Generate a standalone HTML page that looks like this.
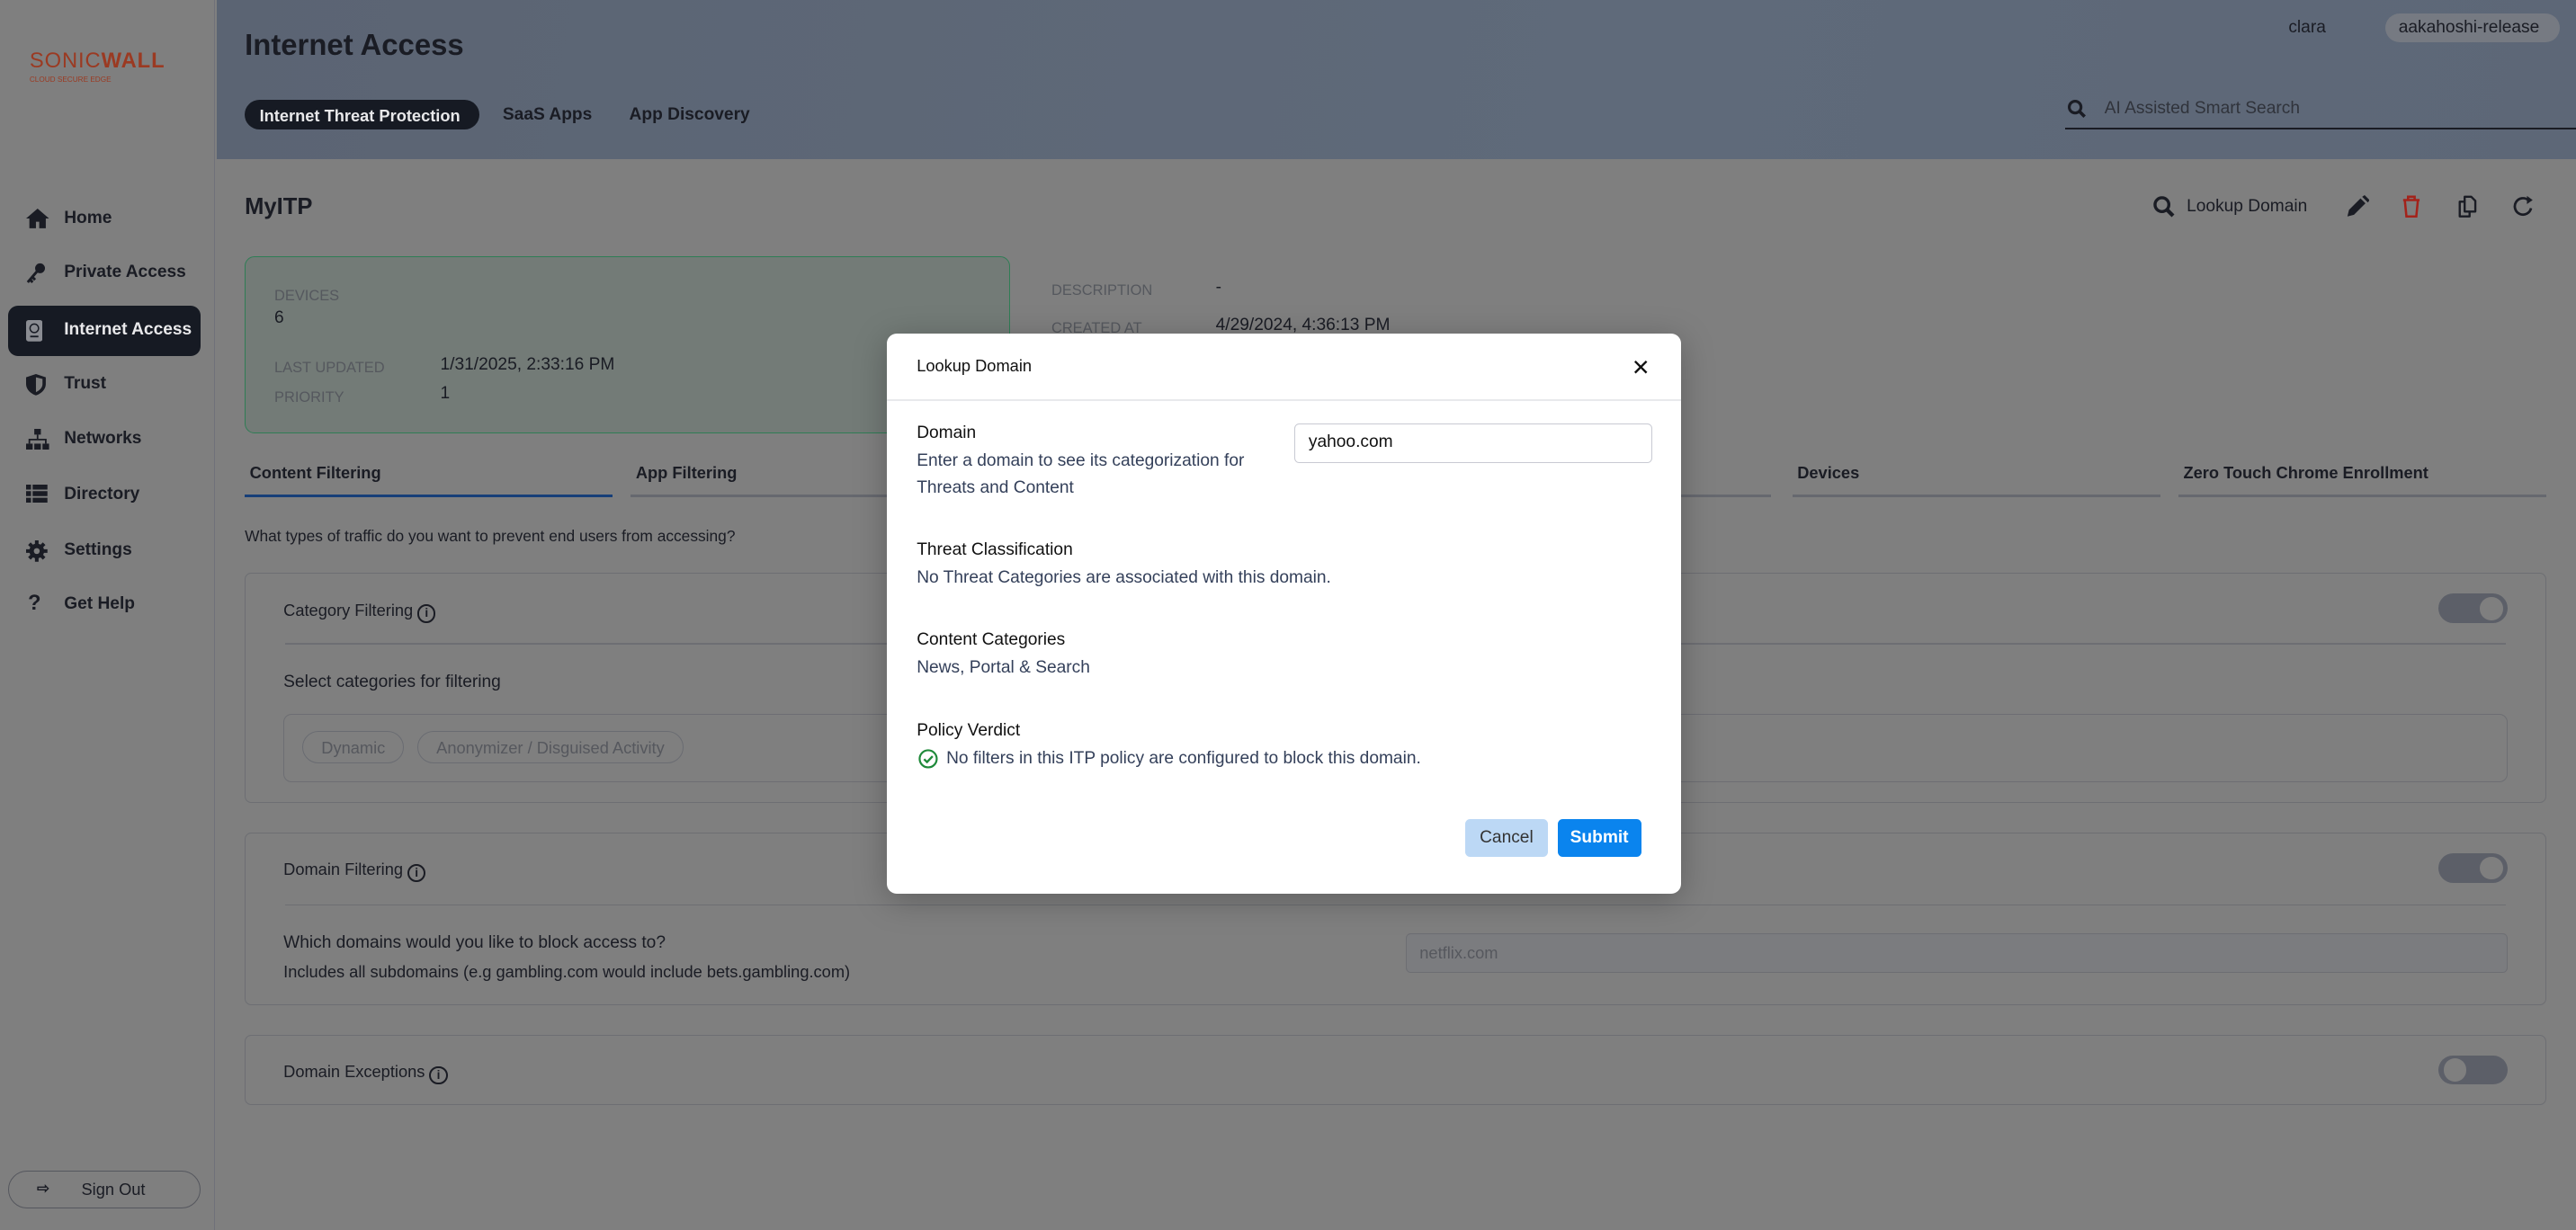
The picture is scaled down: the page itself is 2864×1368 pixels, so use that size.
<!DOCTYPE html>
<html><head><meta charset="utf-8"><style>
*{box-sizing:border-box;margin:0;padding:0}
html,body{width:2864px;height:1368px;overflow:hidden;background:#7f7f7f}
#root{zoom:1.82653;width:1568px;height:749px;position:relative;font-family:"Liberation Sans",sans-serif;color:#1a1c24;background:#7f7f7f}
.a{position:absolute;white-space:nowrap}
.side{position:absolute;left:0;top:0;width:131px;height:749px;border-right:1px solid #6f717a;background:#7f7f7f}
.nav{position:absolute;left:5px;width:117px;height:31px;border-radius:6px;font-size:10.5px;font-weight:bold;color:#1a1c24}
.nav span{position:absolute;left:34px;top:9px}
.nav svg{position:absolute;left:11px;top:9px}
.hdr{position:absolute;left:132px;top:0;width:1436px;height:97px;background:linear-gradient(100deg,#5b6473,#5f6a7a 60%,#5d6777)}
.tabu{position:absolute;top:301px;height:2px;width:224px;background:#66686f}
.box{position:absolute;left:149px;width:1401px;border:1px solid #6d6e73;border-radius:4px}
.sep{position:absolute;left:24px;right:24px;height:1px;background:#6d6e73}
.tog{position:absolute;right:23px;width:42px;height:18px;border-radius:9px;background:#5c5f68}
.tog i{position:absolute;top:2px;width:14px;height:14px;border-radius:50%;background:#7f7f7f}
.chip{position:absolute;top:10px;height:20px;border:1px solid #6a6c72;border-radius:10px;font-size:10px;color:#56585e;padding:4px 11px 0}
.modal{position:absolute;left:540px;top:203px;width:483px;height:341px;background:#fff;border-radius:6px;box-shadow:0 4px 20px rgba(0,0,0,.25)}
.ml{position:absolute;left:18px;font-size:10.5px;color:#111;white-space:nowrap}
.md{position:absolute;left:18px;font-size:10.5px;color:#34405a;white-space:nowrap}
.ii{display:inline-block;width:11px;height:11px;border:1.2px solid #1a1c24;border-radius:50%;font-size:7.5px;text-align:center;line-height:9px;font-weight:bold;vertical-align:-1px}
</style></head><body><div id="root">
<div class="side">
 <div class="a" style="left:18px;top:30px;font-size:13px;color:#9b3a22;letter-spacing:.5px">SONIC<b style="font-weight:900">WALL</b></div>
 <div class="a" style="left:18px;top:46px;font-size:4.5px;color:#9b3a22">CLOUD SECURE EDGE</div>
 <div class="nav" style="top:118px"><svg width="14" height="12" viewBox="0 0 14 12"><path d="M7 0L0 6h2v6h4V8h2v4h4V6h2z" fill="#1a1c24"/></svg><span>Home</span></div>
 <div class="nav" style="top:151px"><svg width="12" height="13" viewBox="0 0 12 13"><circle cx="8.5" cy="3.5" r="3" fill="#1a1c24"/><path d="M7 5L1 12M2.5 10.5l1.5 1.5M4 9l1.5 1.5" stroke="#1a1c24" stroke-width="1.6"/></svg><span>Private Access</span></div>
 <div class="nav" style="top:186px;background:#161a23;color:#e8e8ea"><svg width="10" height="13" viewBox="0 0 10 13"><rect width="10" height="13" rx="1.5" fill="#8a8c92"/><circle cx="5" cy="5" r="2.6" fill="none" stroke="#161a23" stroke-width=".8"/><path d="M2.5 10h5" stroke="#161a23"/></svg><span>Internet Access</span></div>
 <div class="nav" style="top:219px"><svg width="12" height="13" viewBox="0 0 12 13"><path d="M6 0L0 2v4c0 3.5 3 6 6 7 3-1 6-3.5 6-7V2z" fill="#1a1c24"/><path d="M6 2v9c2-1 4-2.5 4-5V3z" fill="#7f7f7f"/></svg><span>Trust</span></div>
 <div class="nav" style="top:252px"><svg width="14" height="13" viewBox="0 0 14 13"><rect x="5" y="0" width="4" height="3.5" fill="#1a1c24"/><path d="M7 3.5V6M2 9V6.5h10V9" stroke="#1a1c24" fill="none"/><rect x="0" y="9" width="4" height="4" fill="#1a1c24"/><rect x="10" y="9" width="4" height="4" fill="#1a1c24"/><rect x="5" y="9" width="4" height="4" fill="#1a1c24"/></svg><span>Networks</span></div>
 <div class="nav" style="top:286px"><svg width="13" height="11" viewBox="0 0 13 11"><path d="M0 0h3v3H0zM4 0h9v3H4zM0 4h3v3H0zM4 4h9v3H4zM0 8h3v3H0zM4 8h9v3H4z" fill="#1a1c24"/></svg><span>Directory</span></div>
 <div class="nav" style="top:320px"><svg width="13" height="13" viewBox="0 0 13 13"><circle cx="6.5" cy="6.5" r="4.5" fill="#1a1c24"/><path d="M6.5 0v13M0 6.5h13M2 2l9 9M11 2l-9 9" stroke="#1a1c24" stroke-width="2.2"/><circle cx="6.5" cy="6.5" r="1.8" fill="#7f7f7f"/></svg><span>Settings</span></div>
 <div class="nav" style="top:353px"><span style="left:12px;font-size:13px;top:7px">?</span><span>Get Help</span></div>
 <div class="a" style="left:5px;top:713px;width:117px;height:23px;border:1px solid #55575e;border-radius:12px;font-size:10px"><span style="position:absolute;left:17px;top:5px;font-size:9px;font-weight:bold">⇨</span><span style="position:absolute;left:44px;top:5px">Sign Out</span></div>
</div>
<div class="hdr"></div>
<div class="a" style="left:149px;top:17px;font-size:18px;font-weight:bold">Internet Access</div>
<div class="a" style="left:149px;top:61px;width:143px;height:18px;border-radius:9px;background:#161a23;color:#e8e8ea;font-size:10px;font-weight:bold;padding:3.5px 0 0 9px">Internet Threat Protection</div>
<div class="a" style="left:306px;top:64px;font-size:10.5px;font-weight:bold">SaaS Apps</div>
<div class="a" style="left:383px;top:64px;font-size:10.5px;font-weight:bold">App Discovery</div>
<div class="a" style="left:1393px;top:11px;font-size:10.5px">clara</div>
<div class="a" style="left:1452px;top:8px;width:106px;height:18px;border-radius:9px;background:#767a82;font-size:10.5px;padding:3px 0 0 8px">aakahoshi-release</div>
<svg class="a" style="left:1258px;top:60px" width="12" height="12" viewBox="0 0 12 12"><circle cx="5" cy="5" r="3.6" fill="none" stroke="#1a1c24" stroke-width="1.7"/><path d="M7.6 7.6l3.2 3.2" stroke="#1a1c24" stroke-width="2"/></svg>
<div class="a" style="left:1281px;top:60px;font-size:10.5px;color:#30333b">AI Assisted Smart Search</div>
<div class="a" style="left:1257px;top:78px;width:311px;height:1px;background:#1a1c24"></div>
<div class="a" style="left:149px;top:118px;font-size:14px;font-weight:bold">MyITP</div>
<svg class="a" style="left:1310px;top:119px" width="14" height="14" viewBox="0 0 12 12"><circle cx="5" cy="5" r="3.6" fill="none" stroke="#1a1c24" stroke-width="1.6"/><path d="M7.6 7.6l3.2 3.2" stroke="#1a1c24" stroke-width="2"/></svg>
<div class="a" style="left:1331px;top:120px;font-size:10.5px">Lookup Domain</div>
<svg class="a" style="left:1428px;top:119px" width="14" height="14" viewBox="0 0 14 14"><path d="M1 13l1-4 7-7 3 3-7 7z M10 1l1.5-1 3 3-1 1.5z" fill="#1a1c24"/></svg>
<svg class="a" style="left:1462px;top:119px" width="12" height="14" viewBox="0 0 12 14"><path d="M1 3h10M4 3V1h4v2M2 3l1 10h6l1-10" fill="none" stroke="#a3231b" stroke-width="1.4"/></svg>
<svg class="a" style="left:1496px;top:119px" width="12" height="14" viewBox="0 0 12 14"><path d="M4.5 1h4l2.5 2.5V10H4.5z M4.5 4H1.5v9h6v-3" fill="none" stroke="#1a1c24" stroke-width="1.3" stroke-linejoin="round"/></svg>
<svg class="a" style="left:1529px;top:119px" width="14" height="14" viewBox="0 0 14 14"><path d="M11.5 8A5 5 0 1 1 10 3.2" fill="none" stroke="#1a1c24" stroke-width="1.5"/><path d="M9 0.5L12.5 3 9 5.5z" fill="#1a1c24"/></svg>
<div class="a" style="left:149px;top:156px;width:466px;height:108px;border:1px solid #2f7d55;border-radius:6px;background:#737b77"></div>
<div class="a" style="left:167px;top:175px;font-size:9px;color:#55585e">DEVICES</div>
<div class="a" style="left:167px;top:188px;font-size:10.5px">6</div>
<div class="a" style="left:167px;top:219px;font-size:9px;color:#55585e">LAST UPDATED</div>
<div class="a" style="left:268px;top:216px;font-size:10.5px">1/31/2025, 2:33:16 PM</div>
<div class="a" style="left:167px;top:237px;font-size:9px;color:#55585e">PRIORITY</div>
<div class="a" style="left:268px;top:234px;font-size:10.5px">1</div>
<div class="a" style="left:640px;top:172px;font-size:9px;color:#55585e">DESCRIPTION</div>
<div class="a" style="left:740px;top:169px;font-size:10.5px">-</div>
<div class="a" style="left:640px;top:195px;font-size:9px;color:#55585e">CREATED AT</div>
<div class="a" style="left:740px;top:192px;font-size:10.5px">4/29/2024, 4:36:13 PM</div>
<div class="a" style="left:152px;top:282px;font-size:10px;font-weight:bold">Content Filtering</div>
<div class="a" style="left:387px;top:282px;font-size:10px;font-weight:bold">App Filtering</div>
<div class="a" style="left:1094px;top:282px;font-size:10px;font-weight:bold">Devices</div>
<div class="a" style="left:1329px;top:282px;font-size:10px;font-weight:bold">Zero Touch Chrome Enrollment</div>
<div class="tabu" style="left:149px;background:#173f78"></div>
<div class="tabu" style="left:384px"></div><div class="tabu" style="left:619px"></div><div class="tabu" style="left:854px"></div><div class="tabu" style="left:1091px"></div><div class="tabu" style="left:1326px"></div>
<div class="a" style="left:149px;top:321px;font-size:9.5px">What types of traffic do you want to prevent end users from accessing?</div>
<div class="box" style="top:349px;height:140px">
 <div class="a" style="left:23px;top:16px;font-size:10px">Category Filtering <span class="ii">i</span></div>
 <div class="tog" style="top:12px"><i style="right:3px"></i></div>
 <div class="sep" style="top:42px"></div>
 <div class="a" style="left:23px;top:60px;font-size:10.5px">Select categories for filtering</div>
 <div class="a" style="left:23px;top:85px;width:1354px;height:42px;border:1px solid #6d6e73;border-radius:5px">
  <div class="chip" style="left:11px">Dynamic</div><div class="chip" style="left:81px">Anonymizer / Disguised Activity</div>
 </div>
</div>
<div class="box" style="top:507px;height:105px">
 <div class="a" style="left:23px;top:16px;font-size:10px">Domain Filtering <span class="ii">i</span></div>
 <div class="tog" style="top:12px"><i style="right:3px"></i></div>
 <div class="sep" style="top:43px"></div>
 <div class="a" style="left:23px;top:61px;font-size:10.5px">Which domains would you like to block access to?</div>
 <div class="a" style="left:23px;top:78px;font-size:10px">Includes all subdomains (e.g gambling.com would include bets.gambling.com)</div>
 <div class="a" style="left:706px;top:61px;width:671px;height:24px;border:1px solid #6d6e73;border-radius:3px;background:#7b7c7f;font-size:10px;color:#56585e;padding:5px 0 0 8px">netflix.com</div>
</div>
<div class="box" style="top:630px;height:43px">
 <div class="a" style="left:23px;top:16px;font-size:10px">Domain Exceptions <span class="ii">i</span></div>
 <div class="tog" style="top:12px"><i style="left:3px"></i></div>
</div>
<div class="modal">
 <div class="ml" style="top:14px;font-size:10px">Lookup Domain</div>
 <svg class="a" style="left:454px;top:16px" width="9" height="9" viewBox="0 0 9 9"><path d="M1 1l7 7M8 1L1 8" stroke="#111" stroke-width="1.3"/></svg>
 <div class="a" style="left:0;top:40px;width:483px;height:1px;background:#e8e9ec"></div>
 <div class="ml" style="top:55px">Domain</div>
 <div class="md" style="top:72px">Enter a domain to see its categorization for</div>
 <div class="md" style="top:88px">Threats and Content</div>
 <div class="a" style="left:248px;top:55px;width:218px;height:24px;border:1px solid #c8cad3;border-radius:3px;font-size:10.5px;padding:5px 0 0 8px;color:#111">yahoo.com</div>
 <div class="ml" style="top:126px">Threat Classification</div>
 <div class="md" style="top:143px">No Threat Categories are associated with this domain.</div>
 <div class="ml" style="top:181px">Content Categories</div>
 <div class="md" style="top:198px">News, Portal &amp; Search</div>
 <div class="ml" style="top:236px">Policy Verdict</div>
 <svg class="a" style="left:19px;top:253px" width="12" height="12" viewBox="0 0 12 12"><circle cx="6" cy="6" r="5.2" fill="none" stroke="#1f8a3a" stroke-width="1.2"/><path d="M3.5 6.2l1.8 1.8 3.4-3.6" fill="none" stroke="#1f8a3a" stroke-width="1.3"/></svg>
 <div class="md" style="left:36px;top:253px">No filters in this ITP policy are configured to block this domain.</div>
 <div class="a" style="left:352px;top:296px;width:50px;height:23px;border-radius:3px;background:#bcd8f5;color:#333;font-size:10.5px;text-align:center;padding-top:5px">Cancel</div>
 <div class="a" style="left:408px;top:296px;width:51px;height:23px;border-radius:3px;background:#0a84ee;color:#fff;font-size:10.5px;font-weight:bold;text-align:center;padding-top:5px">Submit</div>
</div>
</div></body></html>
